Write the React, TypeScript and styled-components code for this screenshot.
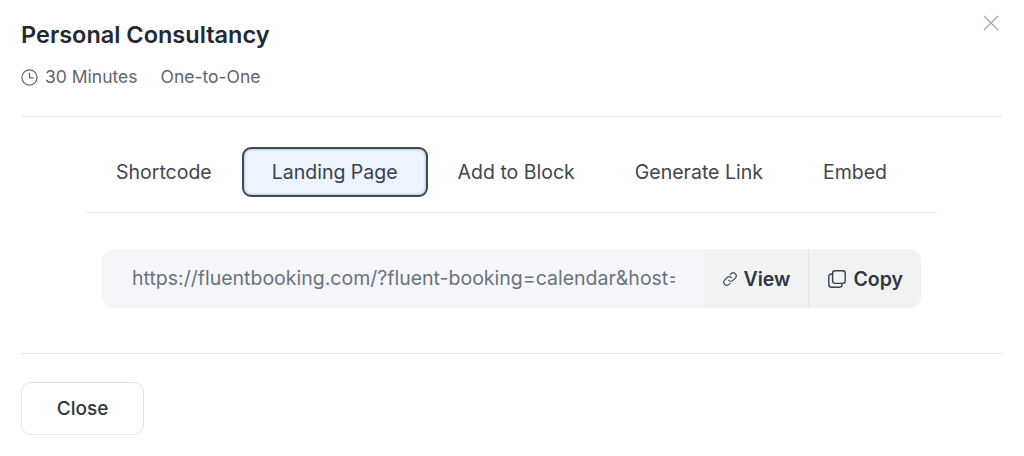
import styled, { createGlobalStyle } from "styled-components"

const GlobalStyle = createGlobalStyle`
  html, body {
    margin: 0;
    padding: 0;
    background: #fff;
  }
  body {
    font-family: Inter, "Liberation Sans", sans-serif;
    -webkit-font-smoothing: antialiased;
  }
`

const tabs = ["Shortcode", "Landing Page", "Add to Block", "Generate Link", "Embed"]

export default function App() {
  return (
    <>
      <GlobalStyle />
      <Modal>
        <Header>
          <Title>Personal Consultancy</Title>
          <Meta>
            <MetaItem>
              <svg width="17" height="17" viewBox="0 0 17 17" fill="none" stroke="#5f6570" strokeWidth="1.2" strokeLinecap="round" strokeLinejoin="round">
                <circle cx="8.5" cy="8.5" r="7.6" />
                <path d="M8.5 4.2v4.6h3.6" />
              </svg>
              30 Minutes
            </MetaItem>
            <MetaItem>One-to-One</MetaItem>
          </Meta>
          <CloseIcon aria-label="Close">
            <svg width="16" height="16" viewBox="0 0 16 16" fill="none" stroke="#a3a6ab" strokeWidth="1.3">
              <path d="M1 1l14 14M15 1L1 15" />
            </svg>
          </CloseIcon>
        </Header>
        <Body>
          <TabBar>
            {tabs.map((t) => (
              <Tab key={t} $active={t === "Landing Page"}>
                {t}
              </Tab>
            ))}
          </TabBar>
          <UrlBox>
            <UrlText>https://fluentbooking.com/?fluent-booking=calendar&host=personal-consultancy</UrlText>
            <UrlAction>
              <svg width="16" height="16" viewBox="0 0 24 24" fill="none" stroke="#4b5563" strokeWidth="1.9" strokeLinecap="round" strokeLinejoin="round">
                <path d="M10 14a4.5 4.5 0 0 0 6.5 0l3.6-3.6a4.6 4.6 0 0 0-6.5-6.5l-1.5 1.5" />
                <path d="M14 10a4.5 4.5 0 0 0-6.5 0l-3.6 3.6a4.6 4.6 0 0 0 6.5 6.5l1.5-1.5" />
              </svg>
              View
            </UrlAction>
            <UrlAction>
              <svg width="20" height="20" viewBox="0 0 20 20" fill="none" stroke="#3a4250" strokeWidth="1.4" strokeLinecap="round" strokeLinejoin="round">
                <rect x="5.6" y="1.8" width="12.6" height="12.6" rx="2.6" />
                <path d="M5.6 5H4.4a2.6 2.6 0 0 0-2.6 2.6v7.8a2.8 2.8 0 0 0 2.8 2.8h7.8a2.6 2.6 0 0 0 2.6-2.6v-1.2" />
              </svg>
              Copy
            </UrlAction>
          </UrlBox>
        </Body>
        <Footer>
          <CloseButton>Close</CloseButton>
        </Footer>
      </Modal>
    </>
  )
}

const Modal = styled.div`
  width: 1024px;
  height: 456px;
  padding: 0 22px 0 21px;
  box-sizing: border-box;
  background: #fff;
  overflow: hidden;
`

const Header = styled.div`
  position: relative;
  height: 117px;
  padding-top: 20px;
  box-sizing: border-box;
  border-bottom: 1px solid #e4e6e9;
`

const Title = styled.h1`
  margin: 0;
  font-size: 23.5px;
  line-height: 30px;
  font-weight: 600;
  color: #1f2937;
`

const Meta = styled.div`
  display: flex;
  gap: 23px;
  margin-top: 12px;
`

const MetaItem = styled.span`
  display: flex;
  align-items: center;
  gap: 7px;
  font-size: 17.5px;
  line-height: 30px;
  color: #5f6570;
`

const CloseIcon = styled.span`
  position: absolute;
  top: 15px;
  right: 3px;
  display: flex;
`

const Body = styled.div`
  height: 237px;
  border-bottom: 1px solid #e4e6e9;
  padding: 30px 65px 0;
  box-sizing: border-box;
`

const TabBar = styled.div`
  display: flex;
  align-items: center;
  height: 66px;
  padding: 0 0 15px 0;
  box-sizing: border-box;
  border-bottom: 1.5px solid #e8eaec;
`

const Tab = styled.div<{ $active?: boolean }>`
  display: flex;
  align-items: center;
  justify-content: center;
  height: 50px;
  box-sizing: border-box;
  padding: 0 ${(p) => (p.$active ? "28px" : "30px")};
  margin: 0 ${(p) => (p.$active ? "0" : "0")};
  border-radius: 9px;
  font-size: 19.5px;
  color: ${(p) => (p.$active ? "#374151" : "#3f4650")};
  background: ${(p) => (p.$active ? "#eef4fd" : "transparent")};
  border: ${(p) => (p.$active ? "2px solid #3b4a5c" : "none")};
  box-shadow: ${(p) => (p.$active ? "inset 0 0 3px rgba(59, 74, 92, 0.5)" : "none")};
`

const UrlBox = styled.div`
  display: flex;
  align-items: stretch;
  height: 59px;
  margin: 36px 16px 0;
  border-radius: 12px;
  background: #f4f6fa;
  overflow: hidden;
`

const UrlText = styled.div`
  flex: 1;
  min-width: 0;
  margin: 0 29px 0 30px;
  overflow: hidden;
  white-space: nowrap;
  font-size: 19.5px;
  line-height: 59px;
  color: #6b7280;
`

const UrlAction = styled.div`
  display: flex;
  align-items: center;
  gap: 6px;
  padding: 0 18px;
  background: #f0f2f4;
  font-size: 19.5px;
  font-weight: 600;
  color: #2f3742;

  & + & {
    border-left: 1px solid #e2e4e7;
  }
`

const Footer = styled.div`
  padding-top: 28px;
`

const CloseButton = styled.button`
  display: block;
  width: 123px;
  height: 53px;
  padding: 0;
  background: #fff;
  border: 1px solid #e2e4e7;
  border-radius: 10px;
  font-family: inherit;
  font-size: 19px;
  font-weight: 500;
  color: #2f3742;
`
